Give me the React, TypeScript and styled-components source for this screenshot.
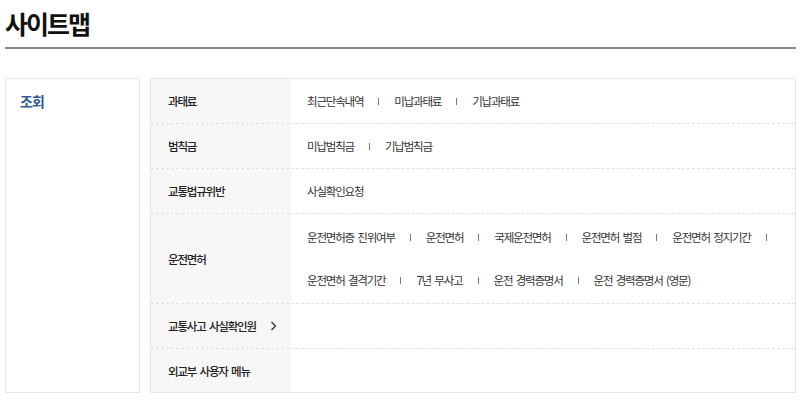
import React from "react";
import styled, { createGlobalStyle } from "styled-components";

type MenuRow = {
  label: string;
  arrow?: boolean;
  lines: string[][];
};

const rows: MenuRow[] = [
  { label: "과태료", lines: [["최근단속내역", "미납과태료", "기납과태료"]] },
  { label: "범칙금", lines: [["미납범칙금", "기납범칙금"]] },
  { label: "교통법규위반", lines: [["사실확인요청"]] },
  {
    label: "운전면허",
    lines: [
      ["운전면허증 진위여부", "운전면허", "국제운전면허", "운전면허 벌점", "운전면허 정지기간", ""],
      ["운전면허 결격기간", "7년 무사고", "운전 경력증명서", "운전 경력증명서 (영문)"],
    ],
  },
  { label: "교통사고 사실확인원", arrow: true, lines: [] },
  { label: "외교부 사용자 메뉴", lines: [] },
];

const GlobalStyle = createGlobalStyle`
  body {
    margin: 0;
    background: #fff;
    font-family: "Noto Sans CJK KR", "Noto Sans", sans-serif;
    color: #333;
  }
`;

const Page = styled.div`
  padding: 0 4px 0 5px;
`;

const Title = styled.h1`
  margin: 0;
  padding-top: 5px;
  height: 42px;
  font-size: 25px;
  font-weight: 700;
  color: #111;
  line-height: 36px;
  letter-spacing: -2px;
  border-bottom: 2px solid #8a8a8a;
`;

const Body = styled.div`
  display: flex;
  gap: 10px;
  margin-top: 29px;
`;

const Category = styled.div`
  width: 135px;
  height: 315px;
  box-sizing: border-box;
  border: 1px solid #e6e6e6;
  padding: 12px 14px;
  font-size: 14px;
  font-weight: 700;
  letter-spacing: -1px;
  color: #2c5a94;
`;

const Table = styled.div`
  flex: 1;
  box-sizing: border-box;
  height: 315px;
  border: 1px solid #e6e6e6;
  display: flex;
  flex-direction: column;
`;

const Row = styled.div<{ $tall: boolean }>`
  display: flex;
  box-sizing: border-box;
  height: ${(p) => (p.$tall ? 90 : 45)}px;
  &:first-child {
    height: 44px;
  }
  & + & {
    border-top: 1px dashed #e0e0e0;
  }
  &:last-child {
    flex: 1;
  }
`;

const Label = styled.div`
  width: 140px;
  flex-shrink: 0;
  box-sizing: border-box;
  padding-left: 17px;
  background: #f7f7f7;
  display: flex;
  align-items: center;
  white-space: nowrap;
  font-size: 11.5px;
  font-weight: 500;
  letter-spacing: -1.2px;
  word-spacing: 2px;
  color: #222;
`;

const Chevron = styled.svg`
  margin-left: 14px;
`;

const Links = styled.div`
  flex: 1;
  padding-left: 16px;
  display: flex;
  flex-direction: column;
  justify-content: center;
  gap: 29px;
`;

const Line = styled.div`
  display: flex;
  align-items: center;
  height: 14px;
  white-space: nowrap;
  font-size: 11.5px;
  letter-spacing: -1.2px;
  word-spacing: 2px;
  color: #333;
`;

const Sep = styled.span`
  display: inline-block;
  width: 1px;
  height: 7px;
  background: #777;
  margin: 0 15px;
`;

export default function App() {
  return (
    <Page>
      <GlobalStyle />
      <Title>사이트맵</Title>
      <Body>
        <Category>조회</Category>
        <Table>
          {rows.map((row) => (
            <Row key={row.label} $tall={row.lines.length > 1}>
              <Label>
                {row.label}
                {row.arrow && (
                  <Chevron width="7" height="10" viewBox="0 0 7 10">
                    <path d="M1.5 1 L5.5 5 L1.5 9" fill="none" stroke="#333" strokeWidth="1.3" />
                  </Chevron>
                )}
              </Label>
              <Links>
                {row.lines.map((items, i) => (
                  <Line key={i}>
                    {items.map((item, j) => (
                      <React.Fragment key={j}>
                        {j > 0 && <Sep />}
                        {item && <span>{item}</span>}
                      </React.Fragment>
                    ))}
                  </Line>
                ))}
              </Links>
            </Row>
          ))}
        </Table>
      </Body>
    </Page>
  );
}
